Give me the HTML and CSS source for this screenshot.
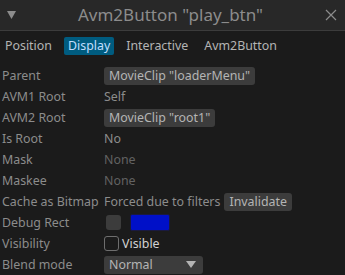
FILE: index.html
```html
<!DOCTYPE html>
<html lang="en">
<head>
    <meta charset="UTF-8">
    <meta name="viewport" content="width=device-width, initial-scale=1.0">
    <title>Avm2Button "play_btn"</title>
    <link rel="stylesheet" href="styles.css">
</head>
<body>
    <div class="window">
        <header class="title-bar">
            <span class="collapse">
                <svg width="9" height="8" viewBox="0 0 9 8"><polygon points="0,0 9,0 4.5,8" fill="#8c8c8c"/></svg>
            </span>
            <span class="title">Avm2Button "play_btn"</span>
            <span class="close">
                <svg width="12" height="12" viewBox="0 0 12 12"><path d="M1 1 L11 11 M11 1 L1 11" stroke="#8c8c8c" stroke-width="1.2"/></svg>
            </span>
        </header>

        <nav class="tabs">
            <span class="tab">Position</span>
            <span class="tab active">Display</span>
            <span class="tab">Interactive</span>
            <span class="tab">Avm2Button</span>
        </nav>

        <div class="props">
            <div class="label">Parent</div>
            <div class="value"><span class="btn">MovieClip "loaderMenu"</span></div>

            <div class="label">AVM1 Root</div>
            <div class="value">Self</div>

            <div class="label">AVM2 Root</div>
            <div class="value"><span class="btn">MovieClip "root1"</span></div>

            <div class="label">Is Root</div>
            <div class="value">No</div>

            <div class="label">Mask</div>
            <div class="value weak">None</div>

            <div class="label">Maskee</div>
            <div class="value weak">None</div>

            <div class="label">Cache as Bitmap</div>
            <div class="value">Forced due to filters <span class="btn btn-gap">Invalidate</span></div>

            <div class="label">Debug Rect</div>
            <div class="value">
                <span class="check filled"></span>
                <span class="swatch"></span>
            </div>

            <div class="label">Visibility</div>
            <div class="value"><span class="check outline"></span><span class="strong">Visible</span></div>

            <div class="label">Blend mode</div>
            <div class="value">
                <span class="combo">Normal
                    <svg width="10" height="7" viewBox="0 0 10 7"><polygon points="0,0 10,0 5,7" fill="#b4b4b4"/></svg>
                </span>
            </div>
        </div>
    </div>
</body>
</html>
```

FILE: styles.css
```css
:root {
    --bg: #1b1b1b;
    --title-bg: #282828;
    --line: #3c3c3c;
    --text: #8c8c8c;
    --text-btn: #b4b4b4;
    --text-weak: #626262;
    --widget: #3c3c3c;
    --select-bg: #005c80;
    --select-text: #c0deff;
}

* {
    margin: 0;
    padding: 0;
    box-sizing: border-box;
}

body {
    background-color: var(--bg);
    color: var(--text);
    font-family: "Noto Sans", sans-serif;
    font-size: 12.4px;
    overflow: hidden;
}

.window {
    width: 345px;
    height: 275px;
}

.title-bar {
    height: 31px;
    background-color: var(--title-bg);
    border-bottom: 1px solid var(--line);
    display: flex;
    align-items: center;
    padding: 0 8px 0 7px;
}

.collapse {
    display: flex;
    width: 9px;
}

.title {
    flex: 1;
    text-align: center;
    font-size: 17px;
    color: var(--text);
    margin-top: -1px;
}

.close {
    display: flex;
}

.tabs {
    display: flex;
    gap: 8px;
    padding: 6px 0 10px 1px;
}

.tab {
    height: 18px;
    line-height: 18px;
    padding: 0 4px;
    border-radius: 2px;
    color: var(--text-btn);
}

.tab.active {
    background-color: var(--select-bg);
    color: var(--select-text);
}

.props {
    display: grid;
    grid-template-columns: 102px 1fr;
    grid-auto-rows: 21px;
    padding-left: 2px;
}

.label,
.value {
    display: flex;
    align-items: center;
    white-space: nowrap;
}

.weak {
    color: var(--text-weak);
}

.strong {
    color: #d2d2d2;
}

.btn {
    display: inline-block;
    height: 18px;
    line-height: 18px;
    padding: 0 5px;
    background-color: var(--widget);
    border-radius: 3px;
    color: var(--text-btn);
}

.btn-gap {
    margin-left: 4px;
}

.check {
    display: inline-block;
    width: 15px;
    height: 15px;
    border-radius: 3px;
}

.check.filled {
    background-color: var(--widget);
    margin-left: 2px;
}

.check.outline {
    border: 1px solid #6e6e6e;
    margin-right: 3px;
}

.swatch {
    display: inline-block;
    width: 40px;
    height: 17px;
    margin-left: 9px;
    background-color: #0010c8;
    border: 1px solid #1a1a40;
    border-radius: 2px;
}

.combo {
    display: flex;
    align-items: center;
    justify-content: space-between;
    width: 99px;
    height: 18px;
    padding: 0 7px 0 5px;
    background-color: var(--widget);
    border-radius: 3px;
    color: var(--text-btn);
}
```
